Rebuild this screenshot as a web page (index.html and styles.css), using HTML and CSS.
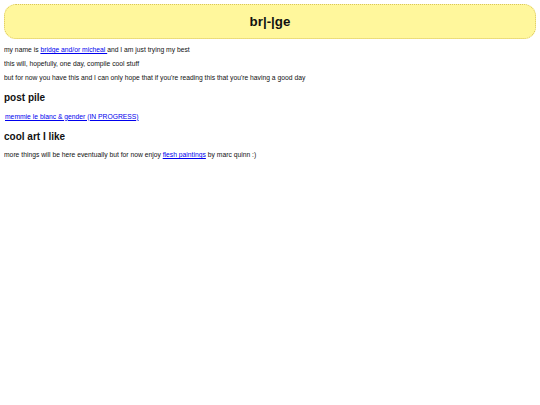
FILE: index.html
```html
<!DOCTYPE html>
<html>
<head>
<meta charset="utf-8">
<link rel="stylesheet" href="styles.css">
</head>
<body>
<div class="banner"><h1 class="title">br|-|ge</h1></div>
<p class="text first">my name is <a href="#">bridge and/or micheal </a>and I am just trying my best</p>
<p class="text">this will, hopefully, one day, compile cool stuff</p>
<p class="text">but for now you have this and I can only hope that if you're reading this that you're having a good day</p>
<h2 class="heading">post pile</h2>
<p class="text indent"><a href="#">memmie le blanc &amp; gender (IN PROGRESS)</a></p>
<h2 class="heading">cool art I like</h2>
<p class="text">more things will be here eventually but for now enjoy <a href="#">flesh paintings</a> by marc quinn :)</p>
</body>
</html>
```
FILE: styles.css
```css
html { background: #fff; }
body {
  margin: 4px;
  font-family: "Liberation Sans", Arial, sans-serif;
  font-size: 6.75px;
  color: #111;
}
.banner {
  height: 33px;
  display: flex;
  align-items: center;
  justify-content: center;
  background: #fff79c;
  border: 1px dotted #d9c45a;
  border-radius: 12px;
}
.title {
  margin: 0;
  font-size: 13.33px;
  font-weight: bold;
  color: #111;
}
.text {
  margin: 6px 0;
  line-height: 8px;
}
.first { margin-top: 7px; }
.indent { padding-left: 1px; }
.text a { color: #0000ee; }
.heading {
  font-size: 10px;
  line-height: 12px;
  margin: 10px 0 8.5px;
  font-weight: bold;
}
```
